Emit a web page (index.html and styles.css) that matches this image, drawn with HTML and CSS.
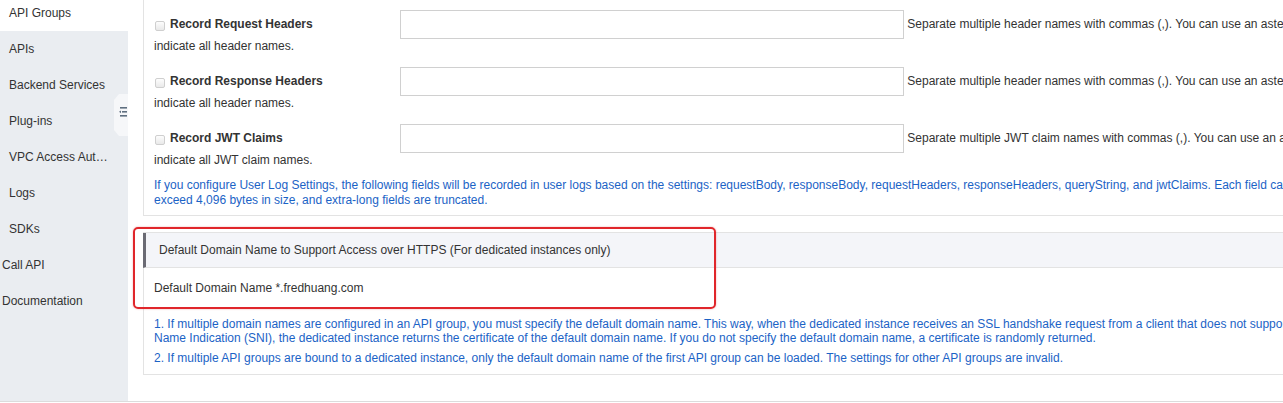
FILE: index.html
```html
<!DOCTYPE html>
<html lang="en">
<head>
    <meta charset="UTF-8">
    <meta name="viewport" content="width=device-width, initial-scale=1.0">
    <title>API Groups</title>
    <link rel="stylesheet" href="styles.css">
</head>
<body>
    <div class="layout">
        <div class="sidebar">
            <ul class="nav">
                <li class="active">API Groups</li>
                <li>APIs</li>
                <li>Backend Services</li>
                <li>Plug-ins</li>
                <li>VPC Access Authorizations</li>
                <li>Logs</li>
                <li>SDKs</li>
                <li class="group">Call API</li>
                <li class="group">Documentation</li>
            </ul>
            <!-- collapse handle -->
            <svg class="collapse" width="14" height="42" viewBox="0 0 14 42">
                <polygon points="5,0 14,0 14,42 5,42 0,36 0,6" fill="#f6f7f9"/>
                <rect x="6" y="13" width="7" height="1.6" fill="#5f6f80"/>
                <rect x="8" y="17" width="5" height="1.6" fill="#5f6f80"/>
                <polygon points="5,17.8 7,16.4 7,19.2" fill="#5f6f80"/>
                <rect x="6" y="21" width="7" height="1.6" fill="#5f6f80"/>
            </svg>
        </div>

        <div class="main">
            <div class="panel panel-log">
                <div class="field">
                    <label class="field-label"><input type="checkbox" class="check"><b>Record Request Headers</b></label><input type="text" class="field-input"> <span class="field-help">Separate multiple header names with commas (,). You can use an asterisk (*) to indicate all header names.</span>
                </div>
                <div class="field">
                    <label class="field-label"><input type="checkbox" class="check"><b>Record Response Headers</b></label><input type="text" class="field-input"> <span class="field-help">Separate multiple header names with commas (,). You can use an asterisk (*) to indicate all header names.</span>
                </div>
                <div class="field">
                    <label class="field-label"><input type="checkbox" class="check"><b>Record JWT Claims</b></label><input type="text" class="field-input"> <span class="field-help">Separate multiple JWT claim names with commas (,). You can use an asterisk (*) to indicate all JWT claim names.</span>
                </div>
                <p class="note note-log">If you configure User Log Settings, the following fields will be recorded in user logs based on the settings: requestBody, responseBody, requestHeaders, responseHeaders, queryString, and jwtClaims. Each field cannot exceed 4,096 bytes in size, and extra-long fields are truncated.</p>
            </div>

            <div class="panel panel-domain">
                <div class="panel-head">Default Domain Name to Support Access over HTTPS (For dedicated instances only)</div>
                <div class="panel-body">
                    <div class="domain">Default Domain Name *.fredhuang.com</div>
                    <p class="note note-first">1. If multiple domain names are configured in an API group, you must specify the default domain name. This way, when the dedicated instance receives an SSL handshake request from a client that does not support Server Name Indication (SNI), the dedicated instance returns the certificate of the default domain name. If you do not specify the default domain name, a certificate is randomly returned.</p>
                    <p class="note note-second">2. If multiple API groups are bound to a dedicated instance, only the default domain name of the first API group can be loaded. The settings for other API groups are invalid.</p>
                </div>
            </div>

            <!-- annotation box drawn over the screenshot -->
            <div class="highlight"></div>
        </div>
    </div>
</body>
</html>
```

FILE: styles.css
```css
*{
    box-sizing: border-box;
}
body{
    margin: 0;
    padding: 0;
    overflow: hidden;
    background-color: #fff;
    color: #333;
    font-family: "Liberation Sans", Arial, Helvetica, sans-serif;
    font-size: 12px;
}
.layout{
    display: flex;
    height: 402px;
    border-bottom: 1px solid #dcdcdc;
}

/* sidebar */
.sidebar{
    flex: none;
    width: 128px;
    position: relative;
    background-color: #eaedf1;
}
.nav{
    list-style: none;
    margin: -5px 0 0;
    padding: 0;
}
.nav li{
    height: 36px;
    line-height: 36px;
    padding: 0 18px 0 9px;
    white-space: nowrap;
    overflow: hidden;
    text-overflow: ellipsis;
}
.nav li.active{
    background-color: #fff;
}
.nav li.group{
    padding-left: 2px;
}
.collapse{
    position: absolute;
    right: 0;
    top: 94px;
}

/* content */
.main{
    flex: none;
    width: 1229px;
    padding-left: 15px;
    position: relative;
}
.panel{
    border: 1px solid #e3e3e3;
    border-right: none;
}
.panel-log{
    margin-top: -12px;
    padding: 21px 10px 7px 10px;
}
.field{
    line-height: 14px;
    margin: 0 -15px 14px 0;
}
.field-label{
    display: inline-block;
    width: 246px;
}
.check{
    -webkit-appearance: none;
    appearance: none;
    width: 10px;
    height: 10px;
    margin: 0 5px 0 1px;
    vertical-align: -3px;
    border: 1px solid #cfcfcf;
    border-radius: 2px;
    background: linear-gradient(#fdfdfd, #e9e9e9);
}
.field-input{
    width: 504px;
    height: 29px;
    margin: 0;
    vertical-align: middle;
    border: 1px solid #d0d0d0;
    background-color: #fff;
}
.note{
    margin: 0;
    color: #1b63c6;
    line-height: 14px;
}
.note-log{
    margin-top: -3px;
    line-height: 15px;
}

.panel-domain{
    margin-top: 16px;
}
.panel-head{
    margin-left: -1px;
    height: 35px;
    line-height: 35px;
    padding-left: 13px;
    background-color: #f4f5f9;
    border-left: 3px solid #6b6b74;
    border-bottom: 1px solid #e3e3e3;
}
.panel-body{
    padding: 13px 10px 9px 10px;
}
.domain{
    line-height: 14px;
}
.note-first{
    margin-top: 22px;
}
.note-second{
    margin-top: 6px;
}

.highlight{
    position: absolute;
    left: 5px;
    top: 227px;
    width: 583px;
    height: 82px;
    border: 2.5px solid #e0262b;
    border-radius: 5px;
    box-shadow: 0 0 2px rgba(200, 0, 0, 0.35);
}
```
